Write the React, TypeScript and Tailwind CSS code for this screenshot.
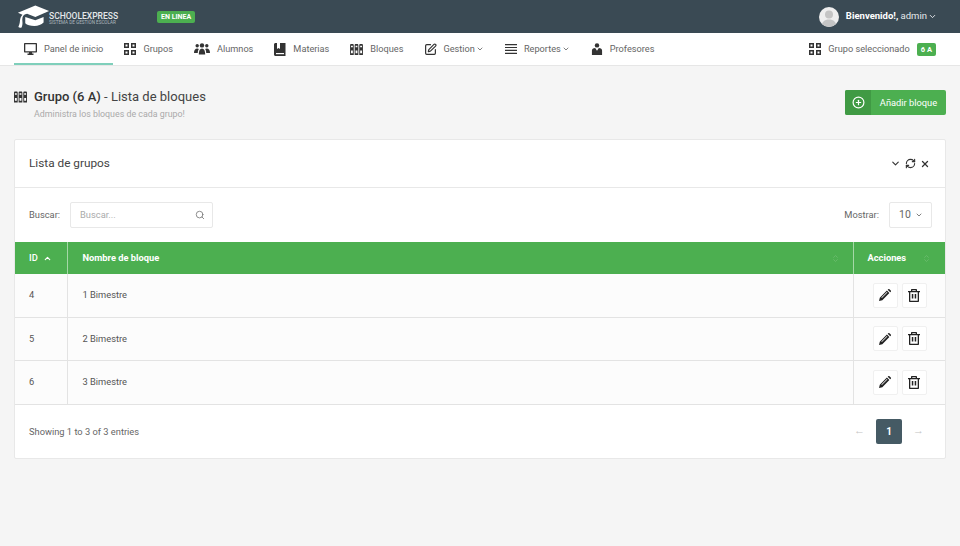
import {
  ChevronDown,
  ChevronUp,
  ChevronsUpDown,
  CirclePlus,
  RefreshCw,
  Search,
  SquarePen,
  X,
} from "lucide-react";

const BlocksIcon = ({ className = "" }: { className?: string }) => (
  <svg viewBox="0 0 14 12" className={className} fill="#333">
    <path d="M0 1.200C0 .5.500 0 1.200 0h1.600C3.500 0 4 .5 4 1.200V12H0zM5 1.200C5 .5 5.500 0 6.200 0h1.600C8.500 0 9 .5 9 1.200V12H5zM10 1.200c0-.7.500-1.200 1.200-1.200h1.600c.7 0 1.200.5 1.200 1.200V12h-4z" />
    <path
      d="M1 2h2v1.500H1zM6 2h2v1.500H6zM11 2h2v1.500h-2zM1 7h2v3H1zM6 7h2v3H6zM11 7h2v3h-2z"
      fill="#fff"
    />
  </svg>
);

const GridIcon = () => (
  <svg viewBox="0 0 12 12" className="h-[12px] w-[12px]" fill="none" stroke="#333" strokeWidth="1.500">
    <path d="M.75.75h3.500v3.500H.75zM7.750.75h3.500v3.500h-3.500zM.75 7.750h3.500v3.500H.75zM7.750 7.750h3.500v3.500h-3.500z" />
  </svg>
);

const MonitorIcon = () => (
  <svg viewBox="0 0 13 12" className="h-[12px] w-[13px]" fill="#333">
    <path d="M1 0h11c.6 0 1 .4 1 1v7.500c0 .6-.4 1-1 1H8v1h1.500V12h-6v-1.500H5v-1H1c-.6 0-1-.4-1-1V1c0-.6.400-1 1-1zm.3 1.300v6.900h10.400V1.300z" />
  </svg>
);

const StudentsIcon = () => (
  <svg viewBox="0 0 16 12" className="h-[12px] w-[16px]" fill="#333">
    <circle cx="3.200" cy="2.800" r="1.700" />
    <circle cx="12.800" cy="2.800" r="1.700" />
    <circle cx="8" cy="2.400" r="2.200" />
    <path d="M0 10c0-3 1.200-4.500 3.200-4.500.7 0 1.300.2 1.700.5C4.100 7 3.800 8.300 3.800 10zM16 10c0-3-1.200-4.500-3.200-4.500-.7 0-1.300.2-1.700.5.800 1 1.100 2.300 1.100 4zM4.800 11.500c0-3.900 1.200-6 3.200-6s3.200 2.100 3.200 6z" />
  </svg>
);

const BookIcon = () => (
  <svg viewBox="0 0 12 13" className="h-[13px] w-[12px]" fill="#333">
    <path d="M0 1.500C0 .7.700 0 1.500 0H3v6l1.500-1L6 6V0h5.500v13H1.500C.7 13 0 12.300 0 11.500z" />
    <path d="M2 10h8v1.200H2z" fill="#fff" />
  </svg>
);

const ListIcon = () => (
  <svg viewBox="0 0 12 10" className="h-[10px] w-[12px]" fill="#333">
    <path d="M0 0h12v1.200H0zM0 2.900h12v1.200H0zM0 5.800h12v1.200H0zM0 8.700h12V10H0z" />
  </svg>
);

const TeacherIcon = () => (
  <svg viewBox="0 0 11 13" className="h-[12px] w-[12px]" fill="#333">
    <circle cx="5.500" cy="2.600" r="2.400" />
    <path d="M0 13V8c0-1.600 1.300-2.600 3.500-2.600l2 3 2-3C9.700 5.400 11 6.400 11 8v5z" />
  </svg>
);

const PencilIcon = () => (
  <svg viewBox="0 0 12 12" className="h-[12px] w-[12px]" fill="#222">
    <path d="M0 12l.8-3.300L7.900 1.600l2.500 2.500-7.100 7.100zM8.700.8l.6-.6c.3-.3.8-.3 1.100 0l1.400 1.400c.3.3.3.8 0 1.100l-.6.600z" />
    <path d="M2.400 8.600 7.900 3.100l.5.5-5.500 5.500z" fill="#fff" />
  </svg>
);

const TrashIcon = () => (
  <svg viewBox="0 0 12 13" className="h-[13px] w-[12px]" fill="#222">
    <path d="M4 0h4c.6 0 1 .4 1 1v1h3v1.300h-1V12c0 .6-.4 1-1 1H2c-.6 0-1-.4-1-1V3.300H0V2h3V1c0-.6.400-1 1-1zm.3 1.200V2h3.400v-.8zM2.300 3.300v8.400h7.400V3.300z" />
    <path d="M3.800 5h1.500v4.500H3.800zM6.700 5h1.500v4.500H6.700z" />
  </svg>
);

const Logo = () => (
  <div className="flex items-center">
    <svg viewBox="0 0 36 26" className="h-[25px] w-[33px]">
      <path
        d="M1 9 20 1l15 6-15 6.500-9-3.500c-3 .6-4.500 2-5 4-.3 1.500-.3 3-.1 4.500.2 2 .2 4-.9 6.500-1.500.5-2.500.3-3.500-.5.800-2 1.500-4 1.700-6.500.2-2.500.8-5 2.800-7z"
        fill="#fff"
      />
      <path
        d="M9 13.500 20 17l9-3.500v6c-2.500 2.500-6 3.800-10 3.800-4.500 0-8-1-10-3z"
        fill="#fff"
      />
    </svg>
    <div className="-ml-[1px] mt-[5px] flex flex-col text-[#e4e8ea]">
      <span className="text-[8.500px] leading-[8px] font-medium">SCHOOLEXPRESS</span>
      <span className="text-[4.600px] leading-[6px] text-[#aeb8be]">
        SISTEMA DE GESTIÓN ESCOLAR
      </span>
    </div>
  </div>
);

const Avatar = () => (
  <svg viewBox="0 0 20 20" className="h-[20px] w-[20px] rounded-full bg-[#eeeeee]">
    <circle cx="10" cy="7.500" r="4" fill="#c4c4c4" />
    <path d="M2.500 20c0-5 3-7.500 7.500-7.500s7.500 2.500 7.500 7.500z" fill="#c4c4c4" />
  </svg>
);

const navItems = [
  { label: "Panel de inicio", icon: <MonitorIcon />, active: true },
  { label: "Grupos", icon: <GridIcon /> },
  { label: "Alumnos", icon: <StudentsIcon /> },
  { label: "Materias", icon: <BookIcon /> },
  { label: "Bloques", icon: <BlocksIcon className="h-[11px] w-[13px]" /> },
  {
    label: "Gestion",
    icon: <SquarePen size={13} color="#333" strokeWidth={2.200} className="-mr-[1px]" />,
    caret: true,
  },
  { label: "Reportes", icon: <ListIcon />, caret: true },
  { label: "Profesores", icon: <TeacherIcon /> },
];

const rows = [
  { id: 4, name: "1 Bimestre", h: "h-[43px]" },
  { id: 5, name: "2 Bimestre", h: "h-[43px]" },
  { id: 6, name: "3 Bimestre", h: "h-[44px]" },
];

const App = () => {
  return (
    <div className="h-[546px] w-[960px] overflow-hidden bg-[#f5f5f5] font-['Roboto',sans-serif] text-[#555]">
      <header className="flex h-[33px] items-center justify-between bg-[#3a4a54] pl-[17px] pr-[23px]">
        <div className="flex items-center gap-[39px]">
          <Logo />
          <span className="rounded-[2px] bg-[#4caf50] px-[4px] py-[1px] text-[7px] leading-[10px] font-bold text-white">
            EN LINEA
          </span>
        </div>
        <div className="flex items-center gap-[7px] text-[9.500px] text-[#e5e9ec]">
          <Avatar />
          <span>
            <b className="font-bold text-white">Bienvenido!,</b> admin
          </span>
          <ChevronDown size={9} className="-ml-[6px]" strokeWidth={2.500} />
        </div>
      </header>

      <nav className="flex h-[33px] items-stretch justify-between border-b border-[#e6e6e6] bg-white pl-[14px] pr-[24px]">
        <ul className="flex items-stretch gap-[1px]">
          {navItems.map((item) => (
            <li
              key={item.label}
              className={`flex items-center gap-[7px] px-[10px] text-[9.200px] text-[#666] ${
                item.active ? "border-b-2 border-[#7fcfbb] pt-[2px]" : ""
              }`}
            >
              {item.icon}
              <span>{item.label}</span>
              {item.caret && <ChevronDown size={8} className="-ml-[6px]" strokeWidth={2.500} />}
            </li>
          ))}
        </ul>
        <div className="flex items-center gap-[7px] text-[9.200px] text-[#666]">
          <GridIcon />
          <span>Grupo seleccionado</span>
          <span className="rounded-[2px] bg-[#4caf50] px-[4px] py-[1px] text-[7.500px] leading-[11px] font-bold text-white">
            6 A
          </span>
        </div>
      </nav>

      <main className="px-[14px]">
        <div className="flex h-[73px] items-start justify-between pt-[24px]">
          <div className="-mt-[1px]">
            <div className="flex items-center gap-[7px]">
              <BlocksIcon className="h-[12px] w-[13px]" />
              <h1 className="text-[13px] leading-[16px] text-[#444]">
                <span className="font-medium text-[#333]">Grupo (6 A)</span> - Lista de bloques
              </h1>
            </div>
            <p className="mt-[3px] pl-[20px] text-[8.850px] leading-[12px] text-[#aaa]">
              Administra los bloques de cada grupo!
            </p>
          </div>
          <button className="flex h-[25px] w-[101px] items-center overflow-hidden rounded-[2px] bg-[#4caf50] text-[9.300px] text-white">
            <span className="flex h-full w-[26px] items-center justify-center bg-[#409a44]">
              <CirclePlus size={13} strokeWidth={2.200} />
            </span>
            <span className="flex-1 text-center">Añadir bloque</span>
          </button>
        </div>

        <section className="h-[320px] w-[932px] rounded-[2px] border border-[#e8e8e8] bg-white">
          <div className="flex h-[48px] items-center justify-between border-b border-[#e8e8e8] pl-[14px] pr-[15px]">
            <h2 className="text-[11.800px] text-[#444]">Lista de grupos</h2>
            <div className="flex items-center gap-[4px] text-[#333]">
              <ChevronDown size={11} strokeWidth={2.500} />
              <RefreshCw size={11} strokeWidth={2.500} />
              <X size={10} strokeWidth={3} />
            </div>
          </div>

          <div className="flex h-[54px] items-center justify-between pl-[14px] pr-[13px] text-[9.300px] text-[#666]">
            <div className="flex items-center gap-[10px]">
              <span>Buscar:</span>
              <div className="flex h-[26px] w-[143px] items-center justify-between rounded-[2px] border border-[#e8e8e8] pl-[9px] pr-[7px] text-[#aaa]">
                <span>Buscar...</span>
                <Search size={10} color="#777" />
              </div>
            </div>
            <div className="flex items-center gap-[10px]">
              <span>Mostrar:</span>
              <div className="flex h-[26px] w-[43px] items-center justify-between rounded-[2px] border border-[#e8e8e8] pl-[9px] pr-[8px] text-[10.500px]">
                <span>10</span>
                <ChevronDown size={8} strokeWidth={2.500} />
              </div>
            </div>
          </div>

          <table className="w-full border-collapse text-[9.300px]">
            <thead>
              <tr className="h-[32px] bg-[#4caf50] text-left text-white">
                <th className="w-[52px] border-r border-[#a5d8a7] pl-[14px] font-medium">
                  <span className="flex items-center gap-[5px]">
                    ID <ChevronUp size={9} strokeWidth={3} />
                  </span>
                </th>
                <th className="border-r border-[#a5d8a7] pl-[15px] font-bold">
                  <span className="flex items-center justify-between pr-[13px]">
                    Nombre de bloque <ChevronsUpDown size={9} className="text-[#6fbe72]" />
                  </span>
                </th>
                <th className="w-[92px] pl-[14px] font-bold">
                  <span className="flex items-center justify-between pr-[14px]">
                    Acciones <ChevronsUpDown size={9} className="text-[#6fbe72]" />
                  </span>
                </th>
              </tr>
            </thead>
            <tbody>
              {rows.map((row) => (
                <tr key={row.id} className={`${row.h} border-b border-[#e3e3e3] bg-[#fcfcfc]`}>
                  <td className="border-r border-[#e3e3e3] pl-[14px]">{row.id}</td>
                  <td className="border-r border-[#e3e3e3] pl-[15px]">{row.name}</td>
                  <td className="pl-[19px]">
                    <div className="flex gap-[4px]">
                      <button className="flex h-[25px] w-[25px] items-center justify-center rounded-[2px] border border-[#f0f0f0] bg-white">
                        <PencilIcon />
                      </button>
                      <button className="flex h-[25px] w-[25px] items-center justify-center rounded-[2px] border border-[#f0f0f0] bg-white">
                        <TrashIcon />
                      </button>
                    </div>
                  </td>
                </tr>
              ))}
            </tbody>
          </table>

          <div className="flex h-[54px] items-center justify-between pl-[14px] pr-[18px] text-[9.300px] text-[#666]">
            <span>Showing 1 to 3 of 3 entries</span>
            <div className="flex items-center gap-[8px] text-[11px] text-[#c4c4c4]">
              <span className="w-[17px] text-center">←</span>
              <span className="flex h-[25px] w-[26px] items-center justify-center rounded-[2px] bg-[#455a64] text-[10px] font-bold text-white">
                1
              </span>
              <span className="w-[17px] text-center">→</span>
            </div>
          </div>
        </section>
      </main>
    </div>
  );
};

export default App;
